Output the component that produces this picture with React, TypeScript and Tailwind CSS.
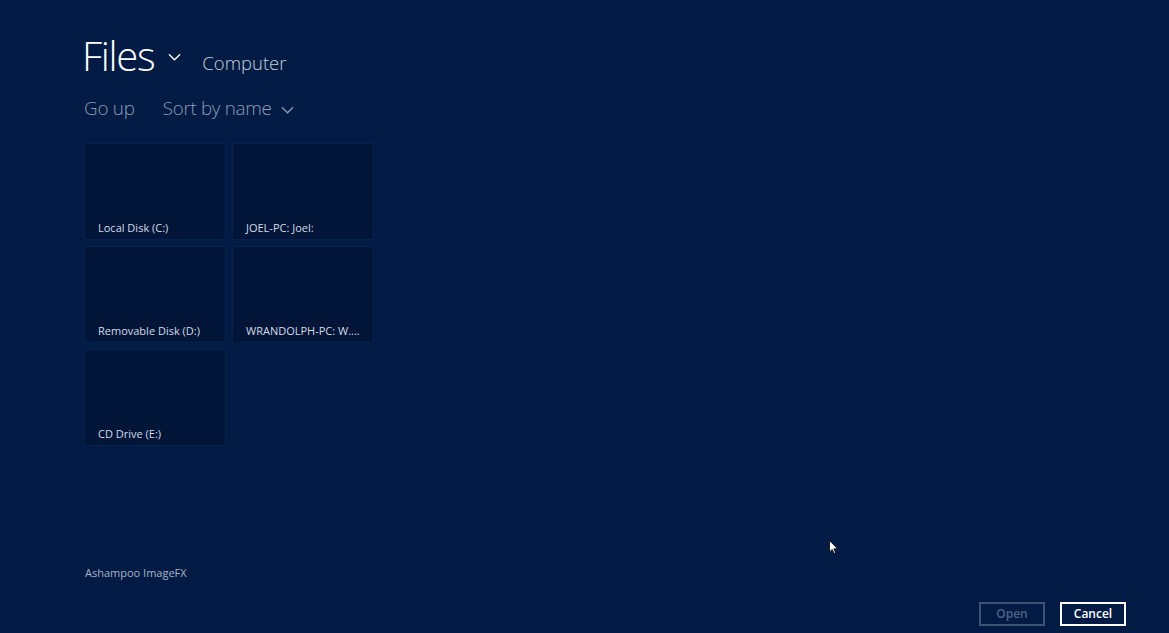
import React from 'react';

const drives = [
  'Local Disk (C:)',
  'JOEL-PC: Joel:',
  'Removable Disk (D:)',
  'WRANDOLPH-PC: W....',
  'CD Drive (E:)',
];

function Chevron({ className }: { className?: string }) {
  return (
    <svg viewBox="0 0 14 8" className={className} fill="none" stroke="currentColor" strokeWidth="1.4">
      <path d="M1 1l6 6 6-6" />
    </svg>
  );
}

export default function App() {
  return (
    <div
      className="relative w-[1169px] h-[633px] bg-[#011b44] text-white overflow-hidden flex flex-col"
      style={{ fontFamily: '"Open Sans", "Noto Sans", sans-serif' }}
    >
      <div className="pl-[82px] pt-[30px] flex items-end">
        <span className="text-[40px] font-light leading-[52px] tracking-[-1.3px] text-white">Files</span>
        <Chevron className="w-[13px] h-[8px] ml-[14px] mb-[21px] text-white" />
        <span className="ml-[21px] mb-[5px] text-[18.5px] font-light text-[#c7d0dd]">Computer</span>
      </div>

      <div className="pl-[84px] mt-[12px] flex items-center text-[18.8px] font-light text-[#8e9db5]">
        <span className="tracking-[-0.2px]">Go up</span>
        <span className="ml-[28px] tracking-[-0.3px]">Sort by name</span>
        <Chevron className="w-[13px] h-[8px] ml-[9px] mt-[3px]" />
      </div>

      <div className="ml-[85px] mt-[22px] grid grid-cols-[140px_140px] gap-[8px] w-[288px]">
        {drives.map((d) => (
          <div
            key={d}
            className="h-[95px] bg-[#001538] shadow-[0_0_0_1px_#05214d] flex items-end px-[13px] pb-[4px]"
          >
            <span className="text-[11px] text-[#d4dbe6] leading-[14px] whitespace-nowrap">{d}</span>
          </div>
        ))}
      </div>

      <div className="flex-1" />

      <div className="pl-[85px] text-[11px] text-[#a7b3c6] mb-[52px]">Ashampoo ImageFX</div>

      <div className="absolute right-[43px] bottom-[7px] flex gap-[15px]">
        <button className="w-[66px] h-[24px] border-2 border-[#3d5275] text-[12px] text-[#4f6385] font-semibold">
          Open
        </button>
        <button className="w-[66px] h-[24px] border-2 border-white text-[12px] text-white font-semibold">
          Cancel
        </button>
      </div>

      <svg className="absolute left-[829px] top-[540px]" width="10" height="16" viewBox="0 0 10 16">
        <path d="M0.5 0.5 L0.5 12 L3.2 9.4 L5 13.5 L6.6 12.8 L4.9 8.8 L8.6 8.8 Z" fill="white" stroke="#000" strokeWidth="0.8" />
      </svg>
    </div>
  );
}
